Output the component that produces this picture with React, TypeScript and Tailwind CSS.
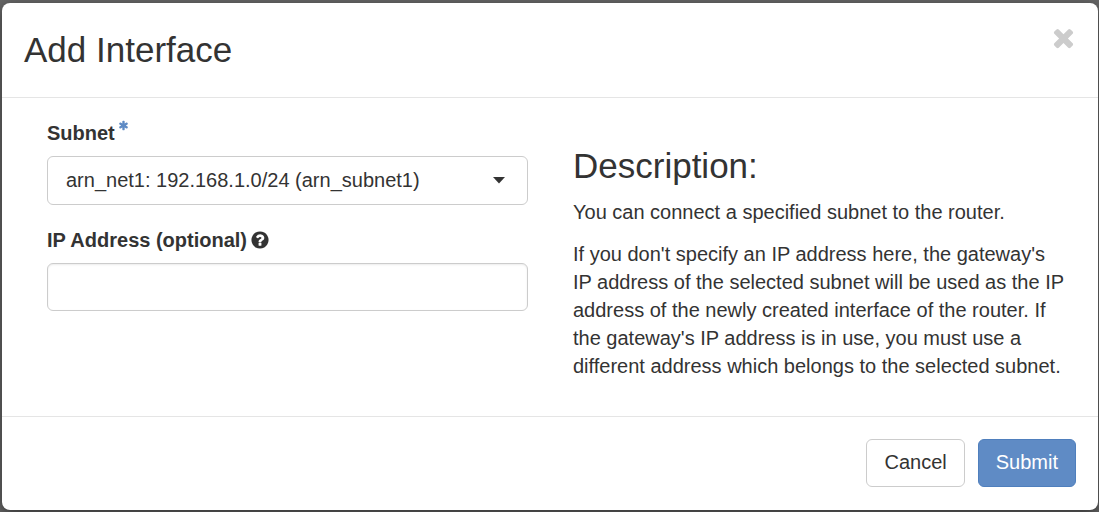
import { useState } from "react";

function TimesIcon() {
  return (
    <svg viewBox="0 0 1792 1792" className="size-[29px]" fill="currentColor" aria-hidden="true">
      <path d="M1490 1322q0 40-28 68l-136 136q-28 28-68 28t-68-28l-294-294-294 294q-28 28-68 28t-68-28l-136-136q-28-28-28-68t28-68l294-294-294-294q-28-28-28-68t28-68l136-136q28-28 68-28t68 28l294 294 294-294q28-28 68-28t68 28l136 136q28 28 28 68t-28 68l-294 294 294 294q28 28 28 68z" />
    </svg>
  );
}

function AsteriskIcon() {
  return (
    <svg viewBox="0 0 1792 1792" className="mt-px size-[11px] text-[#5f8bc5]" fill="currentColor" aria-hidden="true">
      <path d="M1546 1050q46 26 59.5 77.5t-12.5 97.5l-64 110q-26 46-77.5 59.5t-97.5-12.5l-266-153v307q0 52-38 90t-90 38h-128q-52 0-90-38t-38-90v-307l-266 153q-46 26-97.5 12.5t-77.5-59.5l-64-110q-26-46-12.5-97.5t59.5-77.5l266-154-266-154q-46-26-59.5-77.5t12.5-97.5l64-110q26-46 77.5-59.5t97.5 12.5l266 153v-307q0-52 38-90t90-38h128q52 0 90 38t38 90v307l266-153q46-26 97.5-12.5t77.5 59.5l64 110q26 46 12.5 97.5t-59.5 77.5l-266 154z" />
    </svg>
  );
}

function QuestionIcon() {
  return (
    <svg viewBox="0 0 1792 1792" className="size-5" fill="currentColor" aria-hidden="true">
      <path d="M1024 1376v-192q0-14-9-23t-23-9h-192q-14 0-23 9t-9 23v192q0 14 9 23t23 9h192q14 0 23-9t9-23zm256-672q0-88-55.5-163t-138.5-116-170-41q-243 0-371 213-15 24 8 42l132 100q7 6 19 6 16 0 25-12 53-68 86-92 34-24 86-24 48 0 85.5 26t37.5 59q0 38-20 61t-68 45q-63 28-115.5 86.5t-52.5 125.5v36q0 14 9 23t23 9h192q14 0 23-9t9-23q0-19 21.5-49.5t54.5-49.5q32-18 49-28.5t46-35 44.5-48 28-60.5 12.5-81zm384 192q0 209-103 385.5t-279.5 279.5-385.5 103-385.5-103-279.5-279.5-103-385.5 103-385.5 279.5-279.5 385.5-103 385.5 103 279.5 279.5 103 385.5z" />
    </svg>
  );
}

export default function App() {
  const [ip, setIp] = useState("");

  return (
    <div className="min-h-screen bg-[#666666] px-0.5 pt-[3px] pb-0.5 pr-px font-['Liberation_Sans',Arial,sans-serif] text-xl leading-7 text-[#333333]">
      <form
        role="dialog"
        aria-labelledby="dialog-title"
        className="rounded-lg bg-white shadow-[0_4px_14px_rgba(0,0,0,0.5)]"
        onSubmit={(e) => e.preventDefault()}
      >
        <header className="flex items-start justify-between border-b border-[#e5e5e5] px-[22px] pt-5 pb-[23px]">
          <h1 id="dialog-title" className="pt-[3px] text-[35px] leading-12">
            Add Interface
          </h1>
          <button type="button" aria-label="Close" className="-mr-0.5 text-[#cccccc] hover:text-[#888888]">
            <TimesIcon />
          </button>
        </header>

        <div className="grid grid-cols-[481fr_493fr] gap-[45px] pt-[21px] pr-8 pb-9 pl-[45px]">
          <div>
            <div className="mb-[9px] flex gap-[3px]">
              <label htmlFor="subnet" className="font-bold">
                Subnet
              </label>
              <AsteriskIcon />
            </div>
            <div className="mb-[21px] grid items-center">
              <select
                id="subnet"
                required
                className="col-start-1 row-start-1 h-[49px] w-full appearance-none rounded-md border border-[#cccccc] bg-white pr-12 pb-0.5 pl-[18px]"
              >
                <option>arn_net1: 192.168.1.0/24 (arn_subnet1)</option>
              </select>
              <svg
                viewBox="0 0 12 7"
                className="pointer-events-none col-start-1 row-start-1 mr-[23px] h-[7px] w-3 justify-self-end"
                fill="currentColor"
                aria-hidden="true"
              >
                <path d="M0 0h12L6 6.5z" />
              </svg>
            </div>
            <div className="mb-[9px] flex items-center gap-[3px]">
              <label htmlFor="ip" className="font-bold">
                IP Address (optional)
              </label>
              <QuestionIcon />
            </div>
            <input
              id="ip"
              type="text"
              value={ip}
              onChange={(e) => setIp(e.target.value)}
              className="h-12 w-full rounded-md border border-[#cccccc] bg-white px-[18px] shadow-[inset_0_1px_2px_rgba(0,0,0,0.08)]"
            />
          </div>

          <div className="pt-7">
            <h2 className="mb-[13px] text-[35px] leading-[38px]">Description:</h2>
            <p className="mb-3.5">You can connect a specified subnet to the router.</p>
            <p>
              If you don't specify an IP address here, the gateway's IP address of the selected subnet will be used as
              the IP address of the newly created interface of the router. If the gateway's IP address is in use, you
              must use a different address which belongs to the selected subnet.
            </p>
          </div>
        </div>

        <footer className="flex justify-end gap-[13px] border-t border-[#e5e5e5] px-[22px] pt-[22px] pb-[23px]">
          <button type="button" className="h-12 rounded-md border border-[#cccccc] bg-white px-[17px] pb-0.5">
            Cancel
          </button>
          <button
            type="submit"
            className="h-12 rounded-md border border-[#4f7fbd] bg-[#5f8bc5] px-[17px] pb-0.5 text-white"
          >
            Submit
          </button>
        </footer>
      </form>
    </div>
  );
}
